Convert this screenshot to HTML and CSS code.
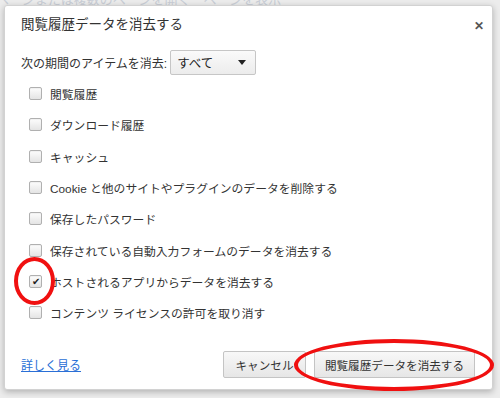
FILE: index.html
```html
<!DOCTYPE html>
<html lang="ja">
<head>
    <meta charset="UTF-8">
    <title>閲覧履歴データを消去する</title>
    <link rel="stylesheet" href="styles.css">
</head>
<body>
    <div class="backdrop">ページまたは複数のページを開く　ページを表示</div>
    <div class="dialog">
        <div class="titleRow">
            <h1>閲覧履歴データを消去する</h1>
            <span class="close">✕</span>
        </div>
        <div class="periodRow">
            <span>次の期間のアイテムを消去:</span>
            <div class="select">すべて<span class="arrow"></span></div>
        </div>
        <ul class="options">
            <li><span class="box"></span>閲覧履歴</li>
            <li><span class="box"></span>ダウンロード履歴</li>
            <li><span class="box"></span>キャッシュ</li>
            <li><span class="box"></span>Cookie と他のサイトやプラグインのデータを削除する</li>
            <li><span class="box"></span>保存したパスワード</li>
            <li><span class="box"></span>保存されている自動入力フォームのデータを消去する</li>
            <li class="marked"><span class="box checked">✔</span>ホストされるアプリからデータを消去する</li>
            <li><span class="box"></span>コンテンツ ライセンスの許可を取り消す</li>
        </ul>
        <div class="footer">
            <a href="#" class="more">詳しく見る</a>
            <div class="buttons">
                <button class="btn cancel">キャンセル</button>
                <button class="btn marked2">閲覧履歴データを消去する</button>
            </div>
        </div>
    </div>
</body>
</html>
```

FILE: styles.css
```css
body {
    margin: 0;
    background: #ececec;
    font-family: "Liberation Sans", "Noto Sans CJK JP", sans-serif;
    color: #333;
    width: 500px;
    height: 398px;
    overflow: hidden;
}

.backdrop {
    height: 5px;
    line-height: 0;
    font-size: 13px;
    color: #c9ced6;
    white-space: nowrap;
    margin-left: -4px;
}

.dialog {
    position: relative;
    margin-left: 4px;
    width: 489px;
    height: 385px;
    background: #fff;
    border: 1px solid #d2d2d2;
    border-radius: 3px;
    box-shadow: 0 2px 6px rgba(0, 0, 0, 0.25);
    padding: 0 0 0 16px;
    box-sizing: border-box;
}

.titleRow {
    display: flex;
    justify-content: space-between;
    align-items: flex-start;
    padding-top: 9px;
    padding-right: 8px;
}

h1 {
    margin: 0;
    font-size: 13.5px;
    font-weight: normal;
    color: #333;
    line-height: 20px;
}

.close {
    margin-top: 4px;
    font-size: 12px;
    font-weight: bold;
    color: #555;
    line-height: 14px;
}

.periodRow {
    display: flex;
    align-items: center;
    gap: 3px;
    margin-top: 15px;
    font-size: 12px;
}

.select {
    display: flex;
    align-items: center;
    justify-content: space-between;
    width: 86px;
    height: 25px;
    box-sizing: border-box;
    padding: 0 9px 0 6px;
    border: 1px solid #c6c6c6;
    border-radius: 2px;
    background: linear-gradient(#fafafa, #ececec);
    font-size: 12.5px;
    color: #222;
}

.arrow {
    width: 0;
    height: 0;
    border-left: 4px solid transparent;
    border-right: 4px solid transparent;
    border-top: 5px solid #222;
}

.options {
    list-style: none;
    margin: 3px 0 0;
    padding: 0 0 0 8px;
}

.options li {
    display: flex;
    align-items: center;
    height: 31.3px;
    font-size: 11.8px;
    color: #333;
}

.box {
    width: 11px;
    height: 11px;
    margin-right: 8px;
    border: 1px solid #b0b0b0;
    border-radius: 2px;
    background: linear-gradient(#fdfdfd, #e4e4e4);
    box-shadow: inset 0 1px 1px rgba(0, 0, 0, 0.05);
    font-size: 10px;
    line-height: 11px;
    text-align: center;
    color: #222;
    flex-shrink: 0;
}

.marked {
    position: relative;
}

.marked::before {
    content: "";
    position: absolute;
    left: -15px;
    top: -9px;
    width: 33px;
    height: 40px;
    border: 4px solid #f01010;
    border-radius: 50%;
}

.footer {
    display: flex;
    justify-content: space-between;
    align-items: center;
    margin-top: 23px;
    padding-right: 17px;
}

.more {
    font-size: 12px;
    color: #2a6fd6;
    text-decoration: underline;
}

.buttons {
    display: flex;
    gap: 8px;
}

.btn {
    height: 27px;
    padding: 0 6px;
    border: 1px solid #c4c4c4;
    border-radius: 2px;
    background: linear-gradient(#f8f8f8, #e6e6e6);
    font-family: "Liberation Sans", "Noto Sans CJK JP", sans-serif;
    font-size: 11.6px;
    color: #333;
    white-space: nowrap;
}

.cancel {
    width: 83px;
}

.marked2 {
    position: relative;
    width: 161px;
}

.marked2::before {
    content: "";
    position: absolute;
    left: -21px;
    top: -13px;
    width: 192px;
    height: 44px;
    border: 4px solid #f01010;
    border-radius: 50%;
}
```
